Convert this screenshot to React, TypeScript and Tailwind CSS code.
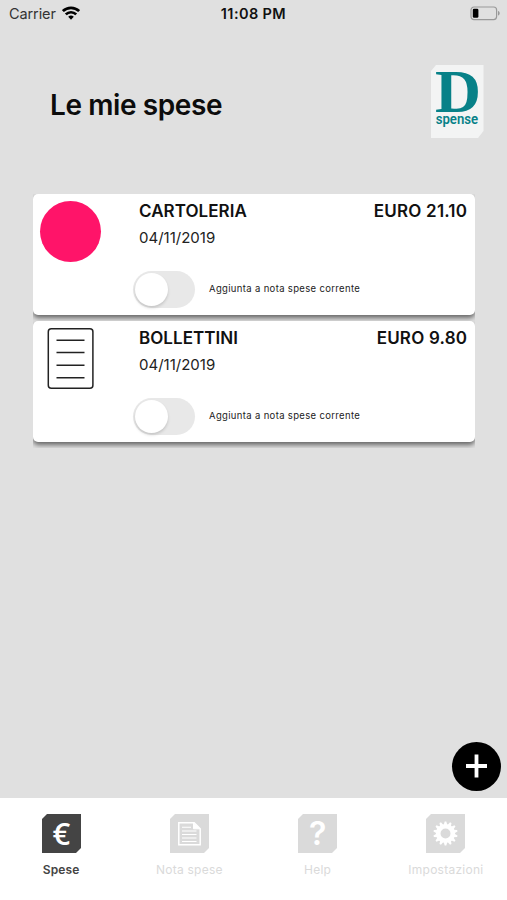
import type { ReactNode } from 'react'

type Expense = {
  title: string
  date: string
  amount: string
  icon: 'dot' | 'receipt'
}

type Tab = {
  label: string
  active?: boolean
  glyph: ReactNode
}

const expenses: Expense[] = [
  { title: 'CARTOLERIA', date: '04/11/2019', amount: 'EURO 21.10', icon: 'dot' },
  { title: 'BOLLETTINI', date: '04/11/2019', amount: 'EURO 9.80', icon: 'receipt' },
]

// 14 teeth around the hub of the settings gear
const gearTeeth = Array.from({ length: 14 }, (_, index) => (index * 360) / 14)

const tabs: Tab[] = [
  {
    label: 'Spese',
    active: true,
    glyph: (
      <text
        x="19.3"
        y="30.5"
        textAnchor="middle"
        fontSize="31"
        fontWeight="600"
        fill="#fff"
        className="font-['Open_Sans',sans-serif]"
      >
        €
      </text>
    ),
  },
  {
    label: 'Nota spese',
    glyph: (
      <g fill="none" stroke="#fff">
        <path d="M8.8 8.8h15.4l6 6v16H8.8z" strokeWidth="1.5" />
        <path d="M23.5 9v5.8h6.5z" fill="#fff" strokeWidth="1" />
        <path d="M12 13.3h9M12 17h14.5M12 20.5h14.5M12 24h14.5M12 27.5h14.5" strokeWidth="1.1" />
      </g>
    ),
  },
  {
    label: 'Help',
    glyph: (
      <text
        x="19.7"
        y="31.3"
        textAnchor="middle"
        fontSize="32"
        fontWeight="600"
        fill="#fff"
        className="font-['Inter',sans-serif]"
      >
        ?
      </text>
    ),
  },
  {
    label: 'Impostazioni',
    glyph: (
      <g>
        <circle cx="19.5" cy="19.5" r="7.3" fill="none" stroke="#fff" strokeWidth="4.6" />
        {gearTeeth.map((angle) => (
          <path
            key={angle}
            d="M17.5 11.5 18.7 7.4h1.6l1.2 4.1z"
            fill="#fff"
            transform={`rotate(${angle} 19.5 19.5)`}
          />
        ))}
      </g>
    ),
  },
]

function StatusBar() {
  return (
    <header className="grid h-7 grid-cols-3 items-center pr-[7px] pl-[9px] text-[14.5px] leading-none text-[#111]">
      <div className="flex items-center gap-[6px]">
        <span className="tracking-[-0.1px] text-[#333]">Carrier</span>
        <svg className="-mt-[2px]" width="18" height="14" viewBox="0 0 18 14" fill="none" stroke="#000" strokeWidth="2.7">
          <path d="M.9 5.1a11.6 11.6 0 0 1 16.2 0" />
          <path d="M3.8 8.4a7.4 7.4 0 0 1 10.4 0" />
          <path d="m9 13.7-2.8-2.9a4.2 4.2 0 0 1 5.6 0z" fill="#000" stroke="none" />
        </svg>
      </div>
      <span className="-ml-[2px] text-center font-semibold tracking-[0.4px] whitespace-nowrap">11:08 PM</span>
      <svg className="-mt-[2px] justify-self-end" width="30" height="15" viewBox="0 0 30 15" fill="none">
        <rect x="1" y="1" width="25.6" height="12.6" rx="3" stroke="#999" strokeWidth="1.2" />
        <rect x="2.8" y="2.8" width="5.6" height="9" rx="1.3" fill="#000" />
        <path d="M28 5v4.6c1-.3 1.7-1.2 1.7-2.3s-.7-2-1.7-2.3z" fill="#999" />
      </svg>
    </header>
  )
}

function Logo() {
  return (
    <svg className="overflow-visible" width="53" height="73" viewBox="0 0 53 73">
      <path d="M5 0h47.5v66l-5.500 7H0V6z" fill="#f3f4f4" />
      <text
        x="4"
        y="46.5"
        fontSize="61"
        fontWeight="700"
        fill="#078188"
        textLength="46"
        lengthAdjust="spacingAndGlyphs"
        className="font-['Liberation_Serif',serif]"
      >
        D
      </text>
      <text
        x="4.7"
        y="59"
        fontSize="14"
        fontWeight="600"
        fill="#078188"
        textLength="42.5"
        lengthAdjust="spacingAndGlyphs"
        className="font-['Roboto',sans-serif]"
      >
        spense
      </text>
    </svg>
  )
}

function ExpenseIcon({ icon }: { icon: Expense['icon'] }) {
  if (icon === 'dot') {
    return <div className="size-[61px] rounded-full bg-[#ff1469]" />
  }

  return (
    <svg width="61" height="61" viewBox="0 0 61 61" fill="none" stroke="#222">
      <rect x="8.3" y="0.8" width="44.6" height="59.4" rx="3" strokeWidth="1.5" />
      <path d="M16.5 12.3h28M16.5 24.6h28M16.5 37.2h28M16.5 49.7h28" strokeWidth="1.5" />
    </svg>
  )
}

function ExpenseCard({ expense }: { expense: Expense }) {
  return (
    <li className="h-[127px] overflow-hidden">
      <article className="flex h-[121px] rounded-[5px] bg-white pt-[7px] pr-2 pl-[7px] shadow-[0_3px_5px_rgba(0,0,0,0.55)]">
        <div className="w-[99px] shrink-0">
          <ExpenseIcon icon={expense.icon} />
        </div>
        <div className="flex-1 text-[#111]">
          <div className="flex justify-between text-[17px] leading-[21px] font-semibold">
            <h2 className="tracking-[0.05px]">{expense.title}</h2>
            <span className="-mr-[0.2px] tracking-[0.2px]">{expense.amount}</span>
          </div>
          <p className="mt-[6px] text-[15px] leading-5 text-[#222]">{expense.date}</p>
          <div className="mt-[23px] -ml-[6px] flex items-center gap-[14px]">
            <button
              type="button"
              role="switch"
              aria-checked="false"
              aria-label={expense.title}
              className="h-[37px] w-[62px] rounded-full bg-[#e8e8e8] p-[2px]"
            >
              <span className="block size-[33px] rounded-full bg-white shadow-[0_2px_3px_rgba(0,0,0,0.15)]" />
            </button>
            <span className="text-[9.5px] tracking-[0.34px] text-[#222]">Aggiunta a nota spese corrente</span>
          </div>
        </div>
      </article>
    </li>
  )
}

function TabBar() {
  return (
    <nav className="h-[102px] overflow-hidden bg-white">
      <div className="-mx-[3px] grid grid-cols-4 pt-4">
        {tabs.map((tab) => (
          <button
            key={tab.label}
            type="button"
            className={
              tab.active
                ? 'flex flex-col items-center text-[#444]'
                : 'flex flex-col items-center text-[#dadada]'
            }
          >
            <svg className="overflow-visible" width="39" height="39" viewBox="0 0 39 39">
              <path d="M5 0h34v34l-5 5H0V5z" fill="currentColor" />
              {tab.glyph}
            </svg>
            <span
              className={
                tab.active
                  ? 'mt-[9px] text-[12px] leading-4 font-semibold tracking-[0.1px]'
                  : 'mt-[9px] text-[12px] leading-4 tracking-[0.25px]'
              }
            >
              {tab.label}
            </span>
          </button>
        ))}
      </div>
    </nav>
  )
}

export default function App() {
  return (
    <div className="flex h-[900px] w-[507px] flex-col overflow-hidden bg-[#e0e0e0] font-['Inter',sans-serif]">
      <StatusBar />

      <div className="mt-[37px] flex h-[73px] items-center justify-between pr-[23px] pl-[50px]">
        <h1 className="mt-[7px] text-[28px] leading-9 font-semibold tracking-[-0.4px] text-[#0c0c0c]">Le mie spese</h1>
        <Logo />
      </div>

      <main className="flex flex-1 flex-col justify-between pt-14">
        <ul className="mr-8 ml-[33px]">
          {expenses.map((expense) => (
            <ExpenseCard key={expense.title} expense={expense} />
          ))}
        </ul>

        <button
          type="button"
          aria-label="Aggiungi spesa"
          className="mr-[6px] mb-[7px] flex size-[49px] items-center justify-center self-end rounded-full bg-black"
        >
          <svg className="-mt-[1px] -ml-[1px]" width="21" height="24" viewBox="0 0 21 24" stroke="#fff" strokeWidth="3.8">
            <path d="M10.5.5v23M0 12h21" />
          </svg>
        </button>
      </main>

      <TabBar />
    </div>
  )
}
